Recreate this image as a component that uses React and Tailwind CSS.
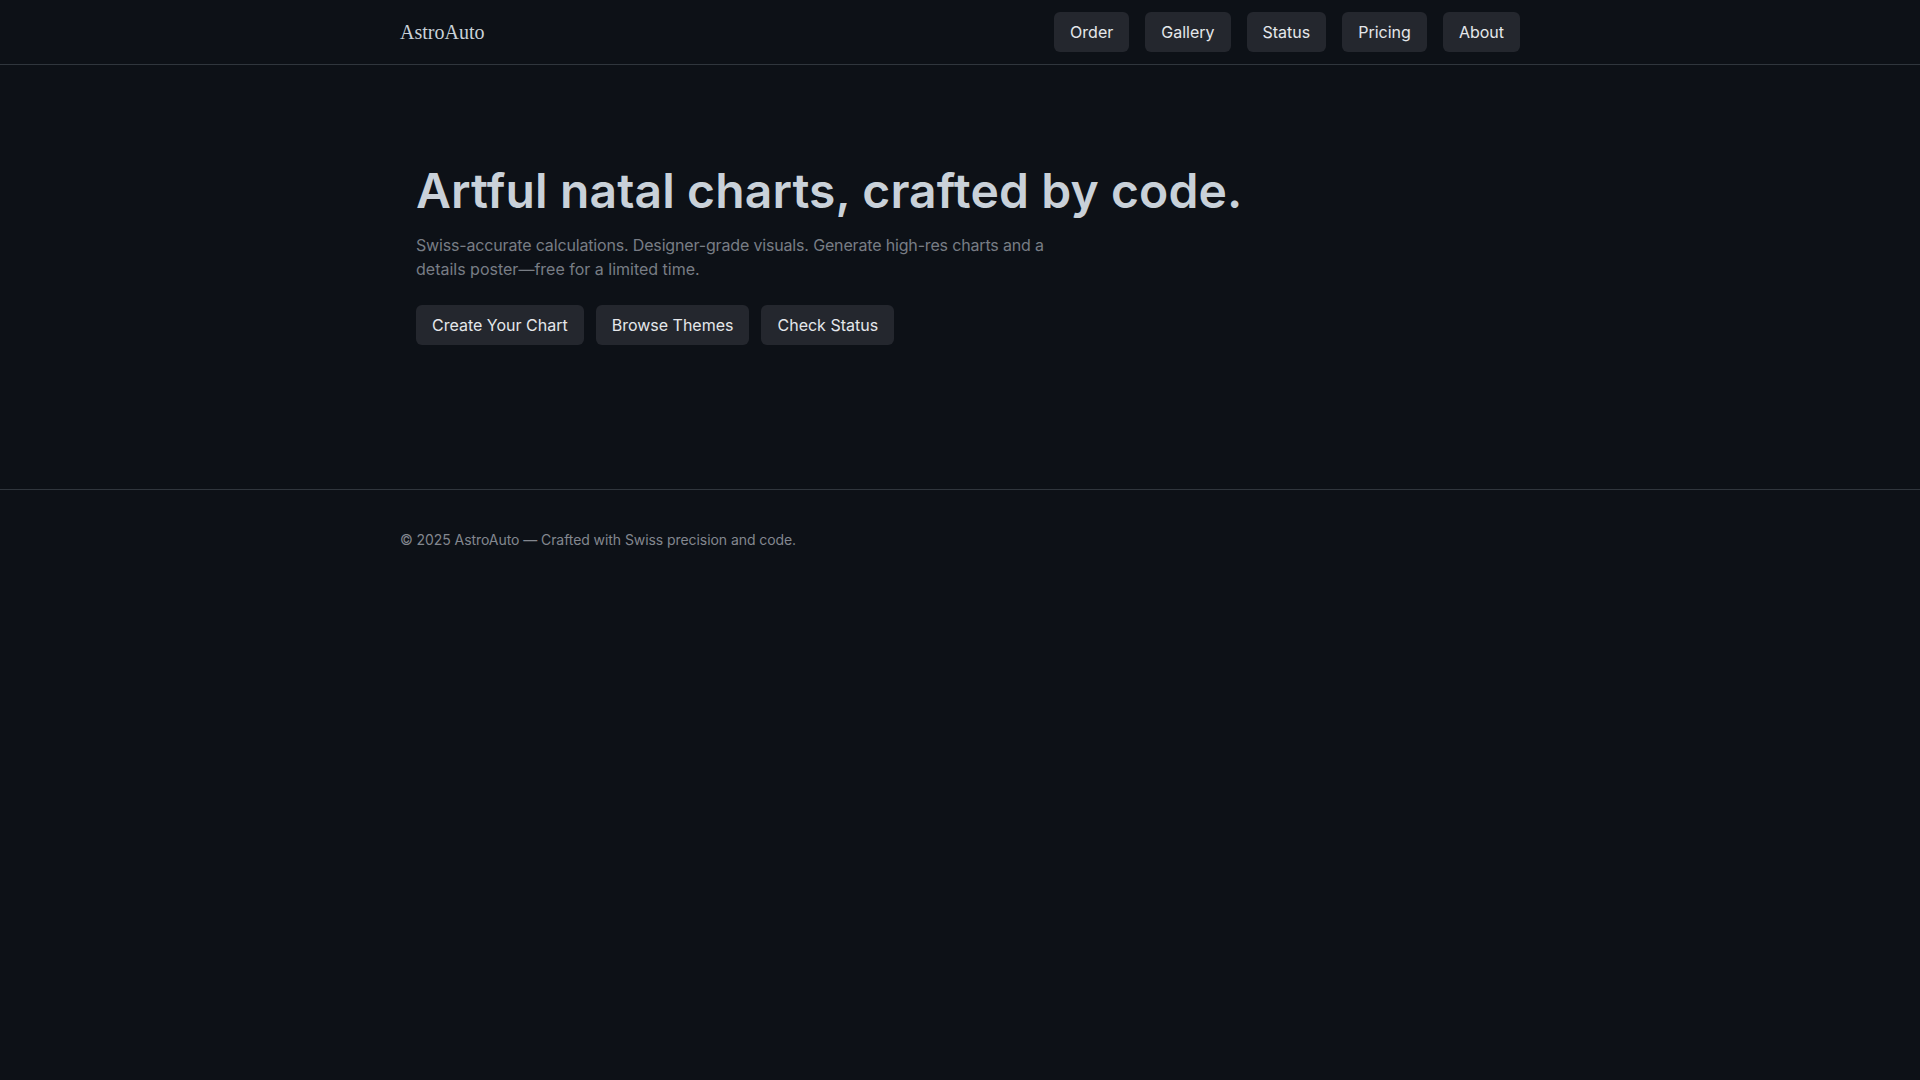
const navItems = ['Order', 'Gallery', 'Status', 'Pricing', 'About'];
const heroActions = ['Create Your Chart', 'Browse Themes', 'Check Status'];

function Btn({ children }) {
  return (
    <a href="#" className="inline-flex h-10 items-center rounded-md bg-[#24272e] px-4 text-base text-[#e5e7eb]">
      {children}
    </a>
  );
}

export default function App() {
  return (
    <div className="min-h-screen bg-[#0d1117] font-['Inter',sans-serif] [font-optical-sizing:none]">
      <header className="border-b border-[#30363d]">
        <div className="mx-auto flex h-16 max-w-6xl items-center justify-between px-4">
          <a href="#" className="font-['Liberation_Serif',serif] text-xl text-[#c9d1d9]">AstroAuto</a>
          <nav className="flex gap-4">
            {navItems.map((item) => <Btn key={item}>{item}</Btn>)}
          </nav>
        </div>
      </header>

      <main className="mx-auto max-w-6xl px-4 pt-[100px] pb-24">
        <section className="px-4 pb-12">
          <h1 className="text-5xl leading-[52px] font-semibold tracking-[0.13px] text-[#c9d1d9]">Artful natal charts, crafted by code.</h1>
          <p className="mt-4 max-w-2xl text-base tracking-[-0.01em] text-[#787d85]">
            Swiss-accurate calculations. Designer-grade visuals. Generate high-res charts and a{' '}
            <span className="tracking-normal">details poster—free for a limited time.</span>
          </p>
          <div className="mt-6 flex gap-3">
            {heroActions.map((item) => <Btn key={item}>{item}</Btn>)}
          </div>
        </section>
      </main>

      <footer className="border-t border-[#30363d]">
        <div className="mx-auto max-w-6xl px-4 py-10 text-sm tracking-[-0.005em] text-[#83878f]">
          © 2025 AstroAuto — Crafted with Swiss precision and code.
        </div>
      </footer>
    </div>
  );
}
